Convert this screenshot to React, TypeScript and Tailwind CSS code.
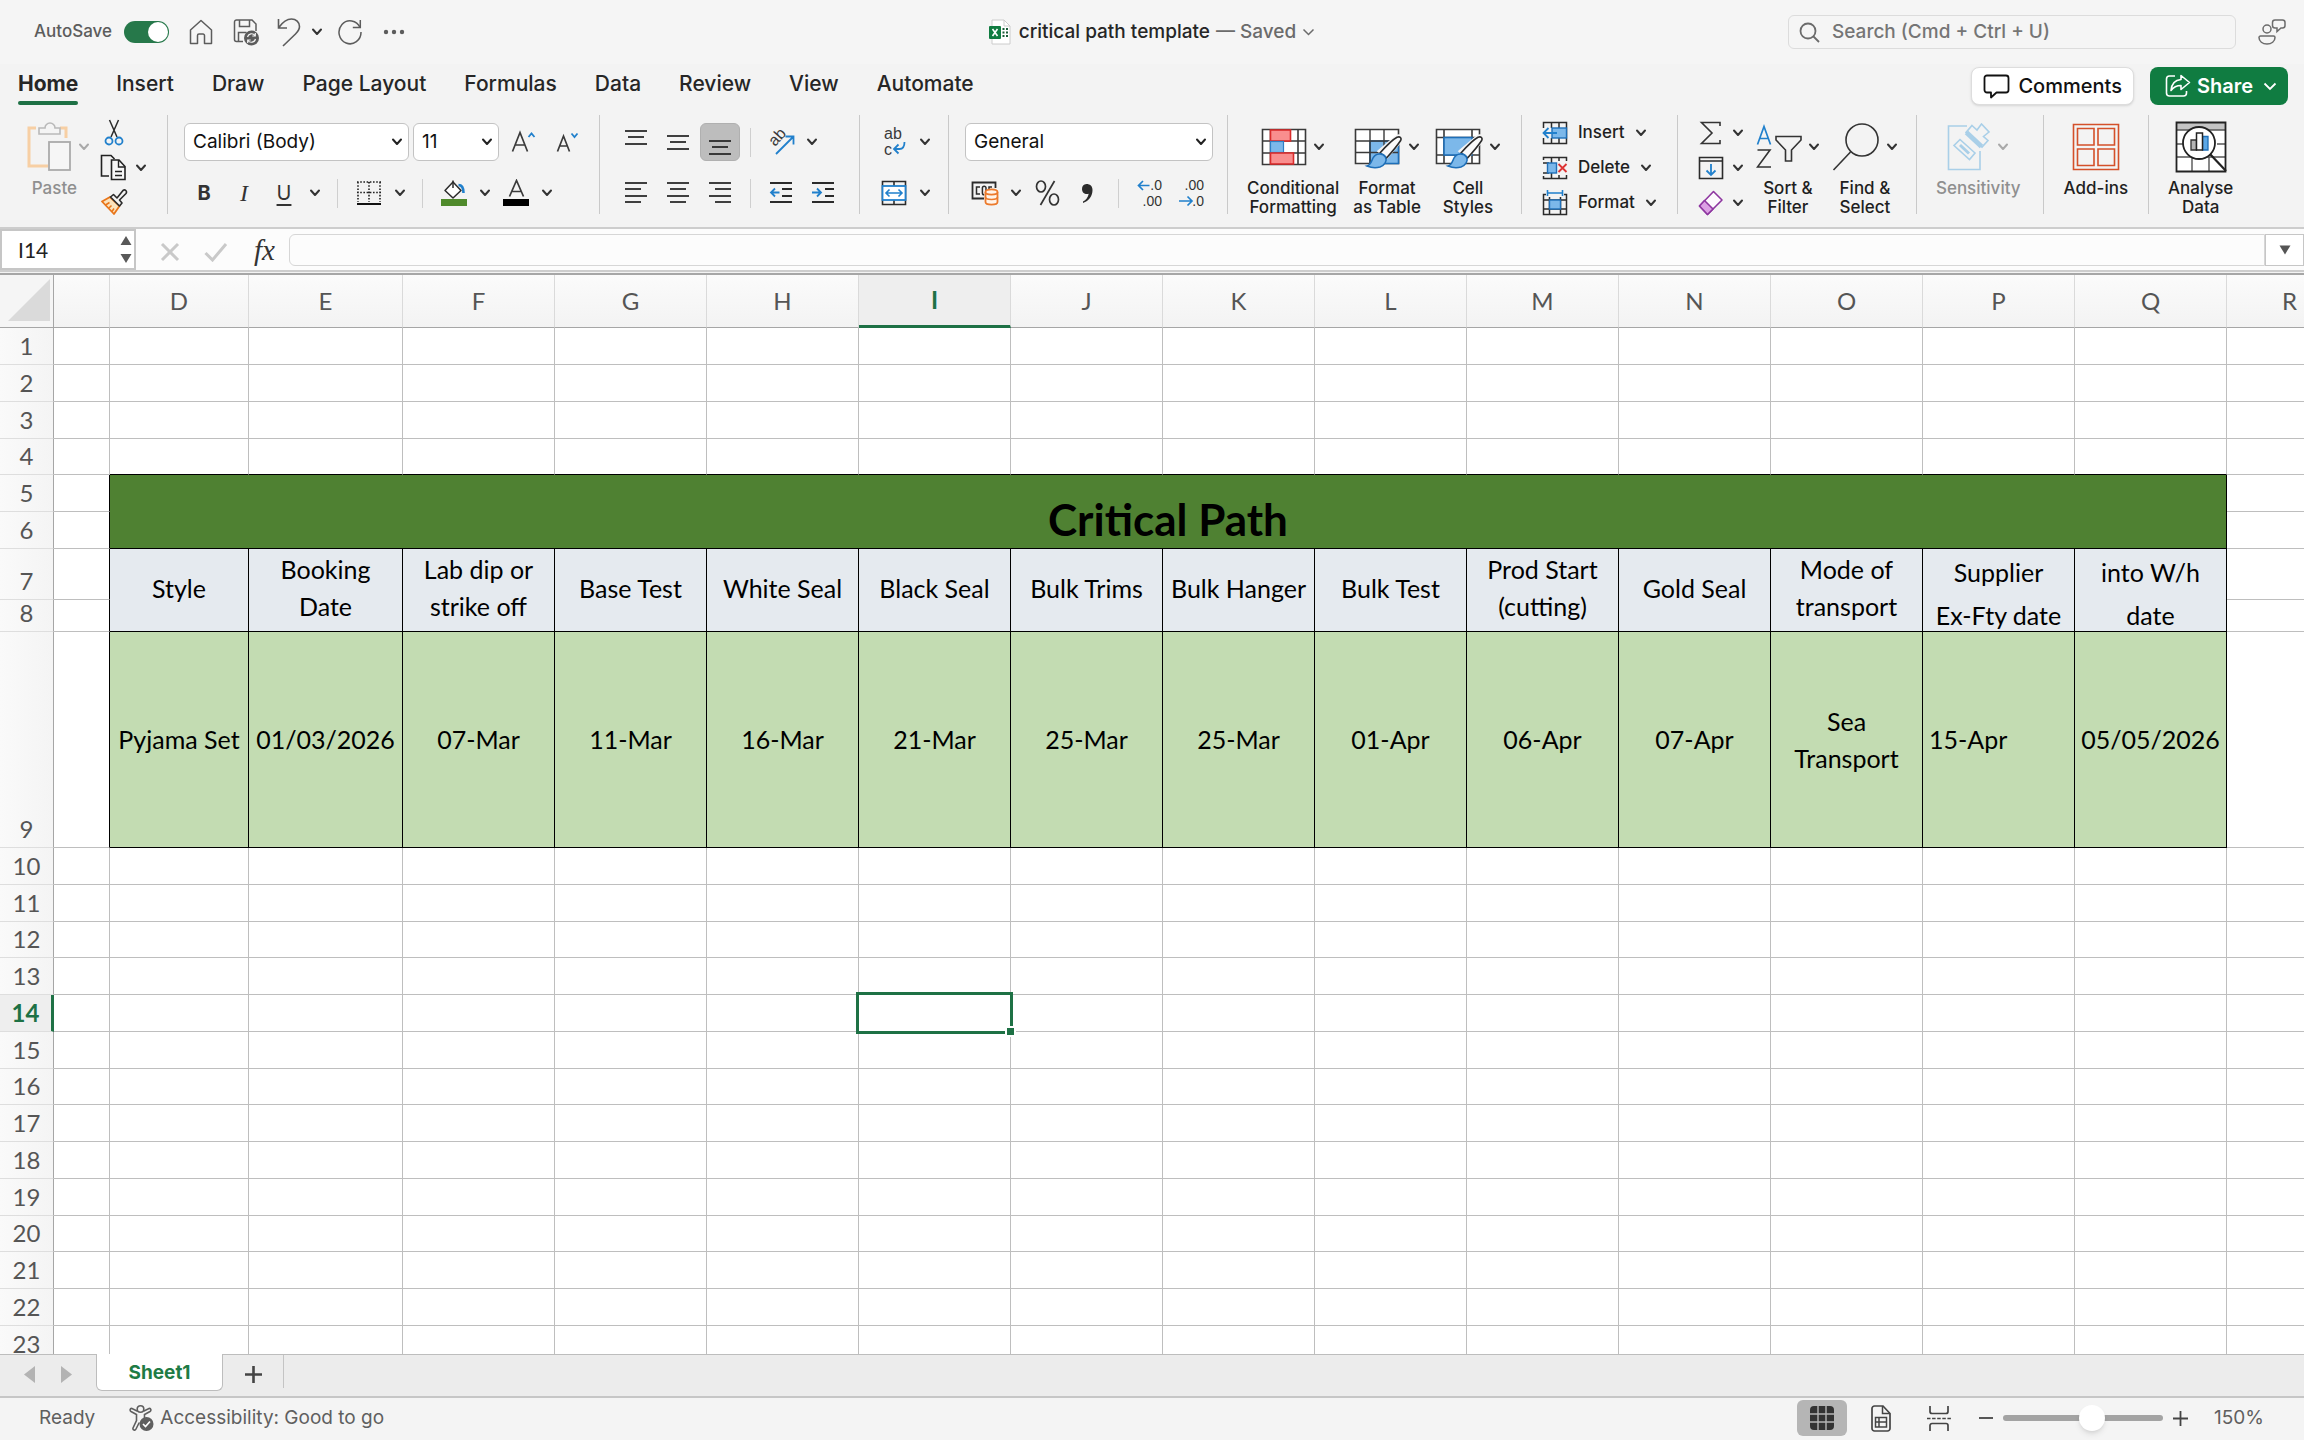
import { useState } from 'react';
import type { ReactNode } from 'react';

// ---------- Data ----------

const TABS = ['Home', 'Insert', 'Draw', 'Page Layout', 'Formulas', 'Data', 'Review', 'View', 'Automate'];

const COLUMNS = [
  { id: '', width: 56 },
  { id: 'D', width: 139 },
  { id: 'E', width: 154 },
  { id: 'F', width: 152 },
  { id: 'G', width: 152 },
  { id: 'H', width: 152 },
  { id: 'I', width: 152 },
  { id: 'J', width: 152 },
  { id: 'K', width: 152 },
  { id: 'L', width: 152 },
  { id: 'M', width: 152 },
  { id: 'N', width: 152 },
  { id: 'O', width: 152 },
  { id: 'P', width: 152 },
  { id: 'Q', width: 152 },
  { id: 'R', width: 126 },
];

// Row heights from row 1 on
const ROWS = [37, 37, 37, 36, 37, 37, 51, 32, 216, 37, 37, 36, 37, 37, 37, 36, 37, 37, 37, 36, 37, 37, 37];

const HEADINGS = [
  ['Style'],
  ['Booking', 'Date'],
  ['Lab dip or', 'strike off'],
  ['Base Test'],
  ['White Seal'],
  ['Black Seal'],
  ['Bulk Trims'],
  ['Bulk Hanger'],
  ['Bulk Test'],
  ['Prod Start', '(cutting)'],
  ['Gold Seal'],
  ['Mode of', 'transport'],
  ['Supplier', 'Ex-Fty date'],
  ['into W/h', 'date'],
];

const VALUES = [
  'Pyjama Set', '01/03/2026', '07-Mar', '11-Mar', '16-Mar', '21-Mar', '25-Mar', '25-Mar',
  '01-Apr', '06-Apr', '07-Apr', 'Sea Transport', '15-Apr', '05/05/2026',
];

// ---------- Small parts ----------

function Svg({ w, h, children, className = '' }: { w: number; h: number; children: ReactNode; className?: string }) {
  return (
    <svg width={w} height={h} viewBox={`0 0 ${w} ${h}`} fill="none" className={`shrink-0 ${className}`} aria-hidden>
      {children}
    </svg>
  );
}

function Chevron({ className = 'text-[#333333]' }: { className?: string }) {
  return (
    <Svg w={12} h={8} className={className}>
      <path d="M2 1.5 6 6l4-4.5" stroke="currentColor" strokeWidth="2" strokeLinecap="round" strokeLinejoin="round" />
    </Svg>
  );
}

function Tool({ label, active, children }: { label: string; active?: boolean; children: ReactNode }) {
  return (
    <button
      type="button"
      aria-label={label}
      className={`flex h-[38px] w-10 items-center justify-center rounded-md ${active ? 'border border-[#b0b0b0] bg-[#bdbdbd]' : ''}`}
    >
      {children}
    </button>
  );
}

function Drop({ label }: { label: string }) {
  return (
    <button type="button" aria-label={label} className="flex h-[38px] w-[22px] items-center justify-center">
      <Chevron />
    </button>
  );
}

function Rule() {
  return <span className="mx-[11px] h-[29px] w-px bg-[#cfcfcf]" />;
}

function Group({ children, className = '' }: { children: ReactNode; className?: string }) {
  return <div className={`flex h-[99px] shrink-0 border-r border-[#c9c9c9] ${className}`}>{children}</div>;
}

function TwoRows({ children }: { children: ReactNode }) {
  return <div className="flex flex-col gap-[13px] pt-2">{children}</div>;
}

function Picker({ label, value, className }: { label: string; value: string; className: string }) {
  return (
    <label className={`relative flex h-[38px] items-center ${className}`}>
      <select
        aria-label={label}
        className="h-full w-full appearance-none rounded-md border border-[#c3c3c3] bg-white pl-2 text-[19px] text-[#111111] outline-none"
      >
        <option>{value}</option>
      </select>
      <Chevron className="pointer-events-none absolute right-1.5 text-[#222222]" />
    </label>
  );
}

function BigTool({ lines, icon, drop, muted }: { lines: string[]; icon: ReactNode; drop?: boolean; muted?: boolean }) {
  return (
    <button type="button" className={`flex flex-col items-center self-start pt-2 text-[17px] leading-[19px] font-medium ${muted ? 'text-[#8f8f8f]' : 'text-[#1f1f1f]'}`}>
      <span className="flex h-12 items-center gap-1.5">
        {icon}
        {drop && <Chevron className={muted ? 'text-[#a9a9a9]' : 'text-[#333333]'} />}
      </span>
      <span className="mt-2 flex flex-col">
        {lines.map((line) => (
          <span key={line}>{line}</span>
        ))}
      </span>
    </button>
  );
}

// Text lines of an alignment icon, each as [x1, x2, y]
function TextLines({ rows }: { rows: number[][] }) {
  return (
    <Svg w={24} h={26}>
      {rows.map(([x1, x2, y], i) => (
        <path key={i} d={`M${x1} ${y}H${x2}`} stroke="#2b2b2b" strokeWidth="1.8" />
      ))}
    </Svg>
  );
}

// ---------- Title bar ----------

function TitleBar() {
  const [autoSave, setAutoSave] = useState(true);
  return (
    <header className="grid h-16 grid-cols-[1fr_auto_1fr] items-center bg-[#f5f5f5]">
      <div className="flex items-center pl-[34px] text-[#5c5c5c]">
        <label className="flex items-center gap-3 text-[17px] font-medium">
          AutoSave
          <input type="checkbox" checked={autoSave} onChange={() => setAutoSave(!autoSave)} className="peer sr-only" />
          <span className="flex h-[22px] w-[45px] items-center justify-end rounded-full bg-[#26784a] px-px">
            <span className="h-5 w-5 rounded-full bg-white" />
          </span>
        </label>
        <button type="button" aria-label="Home" className="ml-5">
          <Svg w={24} h={26}>
            <path d="M1.5 11 12 1.5 22.5 11V24.5h-7V16.5a1.5 1.5 0 0 0-1.5-1.5h-4a1.5 1.5 0 0 0-1.5 1.5v8h-7z" stroke="currentColor" strokeWidth="1.5" strokeLinejoin="round" />
          </Svg>
        </button>
        <button type="button" aria-label="Save" className="ml-5">
          <Svg w={26} h={28}>
            <path d="M10 23.5H3.5a2 2 0 0 1-2-2V4a2 2 0 0 1 2-2H19l4 4v7" stroke="currentColor" strokeWidth="1.5" />
            <path d="M6.5 2v6.5h10V2M5.5 23v-8.5h8" stroke="currentColor" strokeWidth="1.5" />
            <circle cx="18.5" cy="20" r="7.5" fill="currentColor" />
            <path d="M14.5 19a4.2 4.2 0 0 1 7.5-1.5M22.3 15v3h-3M22.5 21a4.2 4.2 0 0 1-7.5 1.5M14.7 25v-3h3" stroke="#f5f5f5" strokeWidth="1.2" />
          </Svg>
        </button>
        <button type="button" aria-label="Undo" className="ml-[18px]">
          <Svg w={24} h={30}>
            <path d="M1.5 2v9h8.5M1.8 10.5C5 6 9 2 14.5 2c4.5 0 8 3 8 7.5 0 3.5-2 5.5-4 7.5L6 29" stroke="currentColor" strokeWidth="1.6" />
          </Svg>
        </button>
        <button type="button" aria-label="Undo list" className="ml-2.5">
          <Chevron />
        </button>
        <button type="button" aria-label="Redo" className="ml-3.5">
          <Svg w={26} h={28}>
            <path d="M23 9.5A11 11.5 0 1 0 24 14" stroke="currentColor" strokeWidth="1.5" />
            <path d="M23.3 2v7.5h-7.5" stroke="currentColor" strokeWidth="1.5" />
          </Svg>
        </button>
        <button type="button" aria-label="More commands" className="ml-5">
          <Svg w={22} h={6}>
            <circle cx="3" cy="3" r="2.2" fill="currentColor" />
            <circle cx="11" cy="3" r="2.2" fill="currentColor" />
            <circle cx="19" cy="3" r="2.2" fill="currentColor" />
          </Svg>
        </button>
      </div>

      <h1 className="flex items-center text-[19px] font-medium text-[#262626]">
        <Svg w={22} h={26} className="mr-2">
          <path d="M3 1h12l6 6v18H3z" fill="#ffffff" stroke="#cccccc" />
          <path d="M15 1v6h6" stroke="#cccccc" />
          <rect x="0" y="7" width="12" height="13" rx="1" fill="#107c41" />
          <path d="m3.5 10 5 7M8.5 10l-5 7" stroke="#ffffff" strokeWidth="1.6" />
          <path d="M13.5 10h2M17 10h2M13.5 13.5h2M17 13.5h2M13.5 17h2M17 17h2" stroke="#185c37" strokeWidth="2" />
        </Svg>
        critical path template
        <span className="ml-1.5 text-[#6b6b6b]">— Saved</span>
        <Svg w={13} h={8} className="ml-1.5 text-[#6b6b6b]">
          <path d="m1.5 1.5 5 5 5-5" stroke="currentColor" strokeWidth="1.5" />
        </Svg>
      </h1>

      <div className="flex items-center justify-end pr-[18px] text-[#6b6b6b]">
        <label className="flex h-[34px] w-[448px] items-center gap-3 rounded-md border border-[#dcdcdc] bg-[#f5f5f5] pl-2.5">
          <Svg w={21} h={21}>
            <circle cx="9" cy="9" r="7.5" stroke="currentColor" strokeWidth="1.8" />
            <path d="m14.5 14.5 5.5 5.5" stroke="currentColor" strokeWidth="1.8" />
          </Svg>
          <input
            aria-label="Search"
            placeholder="Search (Cmd + Ctrl + U)"
            className="w-full bg-transparent text-[19px] font-medium outline-none placeholder:text-[#757575]"
          />
        </label>
        <button type="button" aria-label="Presence" className="ml-[22px]">
          <Svg w={28} h={28}>
            <circle cx="9" cy="11" r="4" stroke="currentColor" strokeWidth="1.5" />
            <path d="M2.5 18h13a1.5 1.5 0 0 1 1.5 1.5c0 4-3.5 6.5-8 6.5s-8-2.5-8-6.5A1.5 1.5 0 0 1 2.5 18z" stroke="currentColor" strokeWidth="1.5" />
            <path d="M17 2h7.5A2.5 2.5 0 0 1 27 4.5v3a2.5 2.5 0 0 1-2.5 2.5H23l-4 3.5V10h-2a2.5 2.5 0 0 1-2.5-2.5v-3A2.5 2.5 0 0 1 17 2z" stroke="currentColor" strokeWidth="1.5" />
          </Svg>
        </button>
      </div>
    </header>
  );
}

// ---------- Tabs ----------

function RibbonTabs() {
  return (
    <nav className="flex h-[51px] items-start bg-[#f3f3f3] pl-[18px] pr-4">
      <div className="flex gap-[38px]">
        {TABS.map((tab) => (
          <button key={tab} type="button" className={`flex flex-col pt-2 text-[21px] leading-6 ${tab === 'Home' ? 'font-bold' : 'font-medium'} text-[#262626]`}>
            {tab}
            {tab === 'Home' && <span className="mt-[5px] h-1 w-full rounded-full bg-[#1e7145]" />}
          </button>
        ))}
      </div>
      <div className="ml-auto flex gap-4 pt-[3px]">
        <button type="button" className="flex h-[38px] items-center gap-2 rounded-lg border border-[#dddddd] bg-white px-[11px] text-[20px] font-medium text-[#111111] shadow-sm">
          <Svg w={27} h={25}>
            <path d="M4 1.5h19A2.5 2.5 0 0 1 25.5 4v12a2.5 2.5 0 0 1-2.5 2.5H13.5L8 23.5v-5H4A2.5 2.5 0 0 1 1.5 16V4A2.5 2.5 0 0 1 4 1.5z" stroke="currentColor" strokeWidth="1.8" strokeLinejoin="round" />
          </Svg>
          Comments
        </button>
        <button type="button" className="flex h-[38px] items-center rounded-lg bg-[#107c41] px-[11px] text-[20px] font-semibold text-white">
          <Svg w={26} h={24} className="mr-1.5 ml-1">
            <path d="M10 2H4.5a3 3 0 0 0-3 3v14a3 3 0 0 0 3 3h14a3 3 0 0 0 3-3v-2" stroke="currentColor" strokeWidth="1.6" />
            <path d="M16 1.5 24.5 8.5 16 15.5v-4c-4.5 0-7.5 1.5-10 5 .5-6 4-10.5 10-11z" stroke="currentColor" strokeWidth="1.6" strokeLinejoin="round" />
          </Svg>
          Share
          <Svg w={14} h={9} className="ml-2.5">
            <path d="m1.5 1.5 5.5 5.5 5.5-5.5" stroke="currentColor" strokeWidth="1.8" />
          </Svg>
        </button>
      </div>
    </nav>
  );
}

// ---------- Ribbon ----------

function PasteIcon() {
  return (
    <Svg w={46} h={50}>
      <path d="M10 6H3v38h19M34 6h6v10" stroke="#f7cfa4" strokeWidth="3" />
      <path d="M14 6h5a5 5 0 0 1 10 0h5v6H13V6z" fill="#f4f4f4" stroke="#b9b9b9" strokeWidth="1.6" />
      <rect x="23" y="20" width="21" height="28" fill="#f6f6f6" stroke="#ababab" strokeWidth="1.8" />
    </Svg>
  );
}

function ClipboardGroup() {
  return (
    <Group className="pl-[26px]">
      <button type="button" className="flex flex-col items-start self-start pt-2 text-[17px] leading-[19px] font-medium text-[#8f8f8f]">
        <span className="flex h-12 items-center gap-1.5">
          <PasteIcon />
          <Chevron className="text-[#a9a9a9]" />
        </span>
        <span className="mt-2 w-[51px] text-right">Paste</span>
      </button>
      <div className="ml-2.5 flex w-[67px] flex-col gap-2 pt-1">
        <button type="button" aria-label="Cut" className="ml-1 w-5">
          <Svg w={20} h={27}>
            <path d="M5.5 1 13 18M14.5 1 7 18" stroke="#2b2b2b" strokeWidth="1.5" />
            <circle cx="5" cy="22" r="3.5" stroke="#2180cc" strokeWidth="1.8" />
            <circle cx="15" cy="22" r="3.5" stroke="#2180cc" strokeWidth="1.8" />
          </Svg>
        </button>
        <button type="button" aria-label="Copy" className="flex items-center gap-2">
          <Svg w={27} h={27}>
            <path d="M9 22H1.5V1.5H11l3.5 3.5" stroke="#222222" strokeWidth="1.6" />
            <path d="M11.5 6H19l6 6.5v13H11.5z" fill="#f6f6f6" stroke="#222222" strokeWidth="1.6" />
            <path d="M18.5 6v7H25M15 17.5h7M15 21.5h7" stroke="#222222" strokeWidth="1.4" />
          </Svg>
          <Chevron />
        </button>
        <button type="button" aria-label="Format Painter" className="w-7">
          <Svg w={28} h={26}>
            <path d="M2 12.5 10 8l9.5 9L14 25z" fill="#fbe3bd" stroke="#e8751a" strokeWidth="1.8" strokeLinejoin="round" />
            <path d="m5.5 16 4-2.5M9 19l2.5-2.5M12 22.5l2-3" stroke="#e8751a" strokeWidth="1.5" />
            <path d="m10.5 8 3-2.5 3.5 3.5 6-7.5c2-1.5 4.5.5 3 3L19.5 11l2.5 3-2.5 3z" fill="#f4f4f4" stroke="#2b2b2b" strokeWidth="1.6" strokeLinejoin="round" />
          </Svg>
        </button>
      </div>
    </Group>
  );
}

function FontGroup() {
  return (
    <Group className="pl-4 pr-3">
      <TwoRows>
        <div className="flex items-center gap-1">
          <Picker label="Font" value="Calibri (Body)" className="w-[225px]" />
          <Picker label="Font size" value="11" className="w-[86px]" />
          <Tool label="Increase font size">
            <Svg w={25} h={24}>
              <path d="M1.5 21.5 9 2.5l7.5 19M4 15h10" stroke="#3a3a3a" strokeWidth="1.7" />
              <path d="m17.5 7 3-3.5 3 3.5" stroke="#2180cc" strokeWidth="1.8" />
            </Svg>
          </Tool>
          <Tool label="Decrease font size">
            <Svg w={23} h={24}>
              <path d="m1.5 21.5 6-15.5 6 15.5M3.5 16h8" stroke="#3a3a3a" strokeWidth="1.7" />
              <path d="m15.5 3.5 3 3.5 3-3.5" stroke="#2180cc" strokeWidth="1.8" />
            </Svg>
          </Tool>
        </div>
        <div className="flex items-center text-[#333333]">
          <Tool label="Bold"><span className="text-[20px] font-bold">B</span></Tool>
          <Tool label="Italic"><span className="font-['Liberation_Serif'] text-[24px] italic">I</span></Tool>
          <Tool label="Underline"><span className="text-[20px] underline underline-offset-4">U</span></Tool>
          <Drop label="Underline styles" />
          <Rule />
          <Tool label="Borders">
            <Svg w={26} h={26}>
              <path d="M1 2h24M1 12.5h24M2 2v20M13 2v20M24 2v20" stroke="#222222" strokeWidth="1.6" strokeDasharray="1.6 1.6" />
              <path d="M1 24h24" stroke="#111111" strokeWidth="2" />
            </Svg>
          </Tool>
          <Drop label="Border styles" />
          <Rule />
          <Tool label="Fill colour">
            <Svg w={26} h={28}>
              <path d="m4 11.5 8-8.5 8 8.5-8 7.5z" fill="#ffffff" stroke="#2b2b2b" strokeWidth="1.5" strokeLinejoin="round" />
              <path d="M12 9V1.5" stroke="#2b2b2b" strokeWidth="1.5" />
              <path d="M17.5 6c3.5 0 5 2.5 5 8" stroke="#2180cc" strokeWidth="2.6" />
              <rect x="0" y="20" width="26" height="7" fill="#4f8a2b" />
            </Svg>
          </Tool>
          <Drop label="Fill colours" />
          <Tool label="Font colour">
            <Svg w={26} h={28}>
              <path d="m6.500 17.500 7-16 7 16M9 12.500h9" stroke="#3a3a3a" strokeWidth="1.7" />
              <rect x="0" y="20" width="26" height="7" fill="#000000" />
            </Svg>
          </Tool>
          <Drop label="Font colours" />
        </div>
      </TwoRows>
    </Group>
  );
}

function AlignmentGroup() {
  return (
    <Group className="px-4">
      <TwoRows>
        <div className="flex items-center">
          <div className="flex gap-0.5">
            <Tool label="Top align"><TextLines rows={[[1, 23, 2], [4, 20, 8], [1, 23, 15]]} /></Tool>
            <Tool label="Middle align"><TextLines rows={[[1, 23, 7], [4, 20, 13], [1, 23, 20]]} /></Tool>
            <Tool label="Bottom align" active><TextLines rows={[[1, 23, 12], [4, 20, 18], [1, 23, 25]]} /></Tool>
          </div>
          <span className="mx-2.5 h-[29px] w-px bg-[#cfcfcf]" />
          <Tool label="Orientation">
            <Svg w={34} h={34}>
              <text transform="translate(11 22) rotate(-48)" fontSize="16" fill="#3a3a3a" className="font-['Liberation_Sans']">ab</text>
              <path d="M12 29 29 12M21.5 11.500h8v8" stroke="#2180cc" strokeWidth="1.8" />
            </Svg>
          </Tool>
          <Drop label="Orientation list" />
        </div>
        <div className="flex items-center">
          <div className="flex gap-0.5">
            <Tool label="Align left"><TextLines rows={[[1, 23, 3], [1, 17, 9], [1, 23, 16], [1, 17, 22]]} /></Tool>
            <Tool label="Centre"><TextLines rows={[[1, 23, 3], [4, 20, 9], [1, 23, 16], [4, 20, 22]]} /></Tool>
            <Tool label="Align right"><TextLines rows={[[1, 23, 3], [7, 23, 9], [1, 23, 16], [7, 23, 22]]} /></Tool>
          </div>
          <span className="mx-2.5 h-[29px] w-px bg-[#cfcfcf]" />
          <div className="flex gap-0.5">
            <Tool label="Decrease indent">
              <Svg w={24} h={26}>
                <path d="M1 3h22M13 9h10M13 16h10M1 22h22" stroke="#2b2b2b" strokeWidth="1.8" />
                <path d="M10.5 12.5h-8M6 8.500l-4 4 4 4" stroke="#2180cc" strokeWidth="1.8" />
              </Svg>
            </Tool>
            <Tool label="Increase indent">
              <Svg w={24} h={26}>
                <path d="M1 3h22M14 9h9M14 16h9M1 22h22" stroke="#2b2b2b" strokeWidth="1.8" />
                <path d="M1 12.5h9M6 8.500l4 4-4 4" stroke="#2180cc" strokeWidth="1.8" />
              </Svg>
            </Tool>
          </div>
        </div>
      </TwoRows>
    </Group>
  );
}

function WrapGroup() {
  return (
    <Group className="pl-3.5 pr-3">
      <TwoRows>
        <div className="flex items-center">
          <Tool label="Wrap text">
            <Svg w={26} h={36} className="font-['Liberation_Sans']">
              <text x="3" y="15" fontSize="16" fill="#3a3a3a">ab</text>
              <text x="3" y="31" fontSize="16" fill="#3a3a3a">c</text>
              <path d="M23.5 18c0 4-1.500 7-5 7h-5M17.500 20.500 13 25l4.500 4.500" stroke="#2180cc" strokeWidth="1.8" />
            </Svg>
          </Tool>
          <Drop label="Wrap options" />
        </div>
        <div className="flex items-center">
          <Tool label="Merge">
            <Svg w={26} h={26}>
              <path d="M1.5 1.5h23v23h-23zM13 1.5V6M13 20v4.5" stroke="#2b2b2b" strokeWidth="1.6" />
              <rect x="1.5" y="6" width="23" height="14" fill="#ffffff" stroke="#2180cc" strokeWidth="1.8" />
              <path d="M5 13h16M8.5 9.5 5 13l3.5 3.5M17.5 9.5 21 13l-3.5 3.5" stroke="#2180cc" strokeWidth="1.6" />
            </Svg>
          </Tool>
          <Drop label="Merge options" />
        </div>
      </TwoRows>
    </Group>
  );
}

function NumberGroup() {
  return (
    <Group className="pl-4 pr-3.5">
      <TwoRows>
        <Picker label="Number format" value="General" className="w-[248px]" />
        <div className="flex items-center">
          <Tool label="Accounting format">
            <Svg w={28} h={26}>
              <path d="M13 18.5H1.5v-16h23V8" stroke="#2b2b2b" strokeWidth="1.8" />
              <path d="M9 7H5.5v7H9M15 13V8a1.8 1.8 0 0 0-3.6 0v5a1.8 1.8 0 0 0 1.8 1.8M18 9V7h3" stroke="#2b2b2b" strokeWidth="1.5" />
              <path d="M14.5 12v10c0 3.5 12 3.5 12 0V12" fill="#fff4ea" stroke="#ec7a2c" strokeWidth="1.8" />
              <ellipse cx="20.5" cy="12" rx="6" ry="2.6" fill="#fff4ea" stroke="#ec7a2c" strokeWidth="1.8" />
              <path d="M14.5 17c0 3.3 12 3.3 12 0" stroke="#ec7a2c" strokeWidth="1.6" />
            </Svg>
          </Tool>
          <Drop label="Currencies" />
          <Tool label="Percent">
            <Svg w={25} h={28}>
              <ellipse cx="6" cy="7.5" rx="4.5" ry="5.5" stroke="#333333" strokeWidth="1.7" />
              <ellipse cx="19" cy="20.5" rx="4.5" ry="5.5" stroke="#333333" strokeWidth="1.7" />
              <path d="M19.5 2 5.5 26" stroke="#333333" strokeWidth="1.7" />
            </Svg>
          </Tool>
          <Tool label="Comma style">
            <Svg w={14} h={22}>
              <path d="M6.5 2A5 5 0 0 0 2 7c0 3 2 5 5 5 .6 0 1.2-.1 1.7-.3C8 15.5 6 18 3 19.5v1.5c6-2 9.5-7 9.5-13C12.5 4 10 2 6.5 2z" fill="#2b2b2b" />
            </Svg>
          </Tool>
          <Rule />
          <div className="flex gap-0.5">
            <Tool label="Increase decimal">
              <Svg w={26} h={34} className="font-['Liberation_Sans']">
                <text x="25" y="14" textAnchor="end" fontSize="14" fill="#333333">.0</text>
                <text x="25" y="30" textAnchor="end" fontSize="14" fill="#333333">.00</text>
                <path d="M12.5 9.500H2M6 5 1.500 9.500 6 14" stroke="#2180cc" strokeWidth="1.7" />
              </Svg>
            </Tool>
            <Tool label="Decrease decimal">
              <Svg w={26} h={34} className="font-['Liberation_Sans']">
                <text x="25" y="14" textAnchor="end" fontSize="14" fill="#333333">.00</text>
                <text x="25" y="30" textAnchor="end" fontSize="14" fill="#333333">.0</text>
                <path d="M0 25h12M8.500 20.500 13 25l-4.500 4.500" stroke="#2180cc" strokeWidth="1.7" />
              </Svg>
            </Tool>
          </div>
        </div>
      </TwoRows>
    </Group>
  );
}

function Brush() {
  return (
    <>
      <path d="M26 27 42 13.5c3.5-2.5 6.5 0 4 3.5L33 32z" fill="#fafafa" stroke="#f4f4f4" strokeWidth="4" />
      <path d="M26 29C34 20 38 16 43 13.3c3-1.3 5 .7 3.5 3.5C43 22 38 28 32.5 34z" fill="#fafafa" stroke="#2b2b2b" strokeWidth="1.6" />
      <path d="M13 42c4-1 4-4 6-8 2.5-5 10-5.5 12.5-1 2 4-1 8.5-5.5 10-4 1.2-9 .7-13-1z" fill="#7cb8ea" stroke="#1e6fb8" strokeWidth="1.6" />
    </>
  );
}

function StylesGroup() {
  return (
    <Group className="gap-3.5 pl-[19px] pr-5">
      <BigTool
        drop
        lines={['Conditional', 'Formatting']}
        icon={
          <Svg w={46} h={38}>
            <path d="M1.5 1.5h43v35h-43zM1.5 13h43M1.5 25h43M37 1.5v35M9.5 1.5v35" fill="#ffffff" stroke="#3a3a3a" strokeWidth="1.6" />
            <rect x="9.5" y="2" width="20" height="11" fill="#f98e8e" stroke="#d92c2c" strokeWidth="1.6" />
            <rect x="9.5" y="13.5" width="13" height="11" fill="#7cb8ea" stroke="#2f7fc4" strokeWidth="1.2" />
            <rect x="9.5" y="25" width="23" height="11" fill="#f98e8e" stroke="#d92c2c" strokeWidth="1.6" />
          </Svg>
        }
      />
      <BigTool
        drop
        lines={['Format', 'as Table']}
        icon={
          <Svg w={48} h={46}>
            <path d="M1.5 5.5h43v34h-43z" fill="#ffffff" stroke="#3a3a3a" strokeWidth="1.6" />
            <path d="M16 17h28.5v22.5H16z" fill="#7cb8ea" stroke="#1e6fb8" strokeWidth="1.6" />
            <path d="M1.5 17H44M1.5 28.5H44M16 5.5v34M30 5.5v34" stroke="#3a3a3a" strokeWidth="1.4" />
            <Brush />
          </Svg>
        }
      />
      <BigTool
        drop
        lines={['Cell', 'Styles']}
        icon={
          <Svg w={48} h={46}>
            <path d="M1.5 5.5h43v34h-43zM1.5 13.5h43M1.5 31h43M9 5.5v34M37 5.5v34" fill="#ffffff" stroke="#3a3a3a" strokeWidth="1.6" />
            <rect x="9" y="13.5" width="28" height="17.5" fill="#7cb8ea" stroke="#1e6fb8" strokeWidth="1.6" />
            <Brush />
          </Svg>
        }
      />
    </Group>
  );
}

function RowTool({ label, icon }: { label: string; icon: ReactNode }) {
  return (
    <button type="button" className="flex h-[35px] shrink-0 items-center text-[17px] font-medium text-[#1f1f1f]">
      {icon}
      <span className="mr-2.5 ml-2.5">{label}</span>
      <Chevron />
    </button>
  );
}

function CellsGroup() {
  return (
    <Group className="flex-col pl-5 pr-5">
      <RowTool
        label="Insert"
        icon={
          <Svg w={26} h={24}>
            <path d="M1.5 7V1.5h23v21h-23V17M9.5 1.5V7M17 1.5V7M9.5 17v5.5M17 17v5.5" stroke="#2b2b2b" strokeWidth="1.5" />
            <rect x="10" y="7" width="14.5" height="10" fill="#7cb8ea" stroke="#1e6fb8" strokeWidth="1.4" />
            <path d="M15 12H2M6.5 7 1.5 12l5 5" stroke="#2180cc" strokeWidth="1.8" />
          </Svg>
        }
      />
      <RowTool
        label="Delete"
        icon={
          <Svg w={26} h={24}>
            <path d="M1.5 4V1.5h23V5M1.5 20v2.5h23V19M1 7h6M1 17h6M9.5 1.5V7M17 1.5V5M9.5 17v5.5M17 19v3.5" stroke="#2b2b2b" strokeWidth="1.5" />
            <rect x="5.5" y="7" width="9" height="10" fill="#7cb8ea" stroke="#1e6fb8" strokeWidth="1.4" />
            <path d="m16.5 8 8 8M24.5 8l-8 8" stroke="#dd3333" strokeWidth="1.8" />
          </Svg>
        }
      />
      <RowTool
        label="Format"
        icon={
          <Svg w={26} h={28}>
            <path d="M5.5 4h15M5.5 1v6M20.5 1v6" stroke="#2180cc" strokeWidth="1.6" />
            <path d="M4 5.5H1.5v20h23v-20H22M1.5 11h23M1.5 20h23M7.5 8v17.5M18.5 8v17.5" stroke="#2b2b2b" strokeWidth="1.5" />
            <rect x="7.5" y="11" width="11" height="9" fill="#7cb8ea" stroke="#1e6fb8" strokeWidth="1.4" />
          </Svg>
        }
      />
    </Group>
  );
}

function EditingGroup() {
  return (
    <Group className="pl-5 pr-[18px]">
      <div className="mr-3 flex flex-col">
        <button type="button" aria-label="AutoSum" className="flex h-[35px] shrink-0 items-center gap-2">
          <Svg w={26} h={24}>
            <path d="M22 5V1.5H3.5L14 12 3.5 22.5H22V19" stroke="#333333" strokeWidth="1.6" />
          </Svg>
          <Chevron />
        </button>
        <button type="button" aria-label="Fill" className="flex h-[35px] shrink-0 items-center gap-2">
          <Svg w={26} h={24}>
            <path d="M1.5 1.5h23v21h-23zM1.5 5h23" stroke="#2b2b2b" strokeWidth="1.6" />
            <path d="M13 8v11M8.5 14.5 13 19l4.5-4.5" stroke="#2180cc" strokeWidth="1.8" />
          </Svg>
          <Chevron />
        </button>
        <button type="button" aria-label="Clear" className="flex h-[35px] shrink-0 items-center gap-2">
          <Svg w={26} h={26}>
            <path d="M15.5 1.5 24 10 9.5 24.5 1.5 16z" fill="#fdfafd" stroke="#8e36a0" strokeWidth="1.6" strokeLinejoin="round" />
            <path d="m6.5 10.5 8.500 8.500-5.500 5.500L1.500 16z" fill="#dca0e4" stroke="#8e36a0" strokeWidth="1.6" strokeLinejoin="round" />
          </Svg>
          <Chevron />
        </button>
      </div>
      <div className="flex gap-3">
        <BigTool
          drop
          lines={['Sort &', 'Filter']}
          icon={
            <Svg w={46} h={46}>
              <path d="m1.5 20.5 6.5-18 6.5 18M3.5 14.5h9" stroke="#2180cc" strokeWidth="1.7" />
              <path d="M1.5 26h12.5L1.5 43h13.5" stroke="#333333" strokeWidth="1.6" />
              <path d="M20 12.5h25v3.5L35.5 26v11h-6V26L20 16z" stroke="#333333" strokeWidth="1.6" />
            </Svg>
          }
        />
        <BigTool
          drop
          lines={['Find &', 'Select']}
          icon={
            <Svg w={48} h={48}>
              <circle cx="30" cy="17" r="16" stroke="#333333" strokeWidth="1.6" />
              <path d="M18.5 29 1.5 47" stroke="#333333" strokeWidth="1.6" />
            </Svg>
          }
        />
      </div>
    </Group>
  );
}

function LastGroups() {
  return (
    <>
      <Group className="pl-[19px] pr-[22px]">
        <BigTool
          drop
          muted
          lines={['Sensitivity']}
          icon={
            <Svg w={44} h={48}>
              <path d="M20 3H1.5v43.5H33V28" stroke="#a9cfe8" strokeWidth="1.6" />
              <path d="m13 16.5 15 13.5-5.5 6.5L7 22.5z" stroke="#a9cfe8" strokeWidth="1.6" />
              <path d="m13 22 9 8.500" stroke="#a9cfe8" strokeWidth="3" />
              <path d="m25 2.5 5 4.500 4.500-6L42 9l-5.500 4.500 4.500 4-6 6.500-16-14.500z" stroke="#a9cfe8" strokeWidth="1.6" />
              <path d="m19.5 9.500 15 14" stroke="#a9cfe8" strokeWidth="5" />
            </Svg>
          }
        />
      </Group>
      <Group className="px-5">
        <BigTool
          lines={['Add-ins']}
          icon={
            <Svg w={48} h={48}>
              <path d="M1.5 1.5h45v45h-45z" stroke="#d4502a" strokeWidth="1.6" />
              <path d="M5.5 5.5h16.5v16.5H5.5zM26 5.5h16.5v16.5H26zM5.5 26h16.5v16.5H5.5zM26 26h16.5v16.5H26z" stroke="#d4502a" strokeWidth="1.6" />
            </Svg>
          }
        />
      </Group>
      <div className="flex h-[99px] shrink-0 px-[19px]">
        <BigTool
          lines={['Analyse', 'Data']}
          icon={
            <Svg w={52} h={52}>
              <path d="M1.5 1.5h49v49h-49z" fill="#ffffff" />
              <path d="M1.5 1.5h49V9h-49z" fill="#c4c4c4" />
              <path d="M1.5 9h49M1.5 23h8M42 23h8.5M1.5 36h49M17 36v14.5M34 36v14.5" stroke="#555555" strokeWidth="1.4" />
              <path d="M1.5 1.5h49v49h-49z" stroke="#222222" strokeWidth="1.8" />
              <circle cx="24" cy="22" r="16" fill="#ffffff" stroke="#222222" strokeWidth="1.8" />
              <path d="M16 19h5.5v10H16z" fill="#b5b5b5" stroke="#333333" strokeWidth="1.3" />
              <path d="M27.5 15.5H33V29h-5.5z" fill="#5ba7e6" stroke="#1e6fb8" strokeWidth="1.3" />
              <path d="M21.5 12h6v17h-6z" fill="#ffffff" stroke="#222222" strokeWidth="1.5" />
              <path d="m35 33 16 17" stroke="#222222" strokeWidth="2.2" />
            </Svg>
          }
        />
      </div>
    </>
  );
}

function Ribbon() {
  return (
    <div className="flex h-28 items-start overflow-hidden bg-[#f3f3f3]">
      <ClipboardGroup />
      <FontGroup />
      <AlignmentGroup />
      <WrapGroup />
      <NumberGroup />
      <StylesGroup />
      <CellsGroup />
      <EditingGroup />
      <LastGroups />
    </div>
  );
}

// ---------- Formula bar ----------

function FormulaBar() {
  return (
    <div className="border-b-2 border-[#a6a6a6]">
      <div className="mb-px flex h-[45px] items-center border-y-2 border-[#cdcdcd] bg-[#fcfcfc]">
        <label className="flex h-full w-[136px] items-center border-2 border-[#c6c6c6] bg-white pr-0.5">
          <input aria-label="Name box" defaultValue="I14" className="w-full min-w-0 bg-transparent pl-4 font-['Lato'] text-[21px] text-[#222222] outline-none" />
          <Svg w={12} h={32} className="text-[#595959]">
            <path d="m6 2 5.500 9H.5zM6 29l5.500-9H.5z" fill="currentColor" />
          </Svg>
        </label>
        <button type="button" aria-label="Cancel" className="ml-6 pt-1">
          <Svg w={20} h={20}>
            <path d="m2 2 16 16M18 2 2 18" stroke="#c9c9c9" strokeWidth="3" />
          </Svg>
        </button>
        <button type="button" aria-label="Enter" className="ml-6 pt-1">
          <Svg w={24} h={20}>
            <path d="m1.5 11 7 7L22 2" stroke="#c9c9c9" strokeWidth="3" />
          </Svg>
        </button>
        <button type="button" aria-label="Insert function" className="ml-[26px] font-['Liberation_Serif'] text-[29px] leading-8 italic text-[#333333]">
          fx
        </button>
        <input aria-label="Formula" className="ml-3.5 h-8 min-w-0 flex-1 rounded-l-md border border-[#d6d6d6] bg-[#fcfcfc] px-2 text-[20px] outline-none" />
        <button type="button" aria-label="Expand formula bar" className="flex h-8 w-[39px] items-center justify-center border border-[#c6c6c6] bg-white">
          <Svg w={12} h={10}>
            <path d="M.5.5h11L6 9.5z" fill="#555555" />
          </Svg>
        </button>
      </div>
    </div>
  );
}

// ---------- Sheet ----------

function TitleRowCells() {
  return (
    <td colSpan={14} rowSpan={2} className="border-r border-b border-black bg-[#4f8132] p-0 text-center align-bottom text-[44px] leading-[58px] font-bold text-black">
      Critical Path
    </td>
  );
}

function HeadingCells() {
  return (
    <>
      {HEADINGS.map((lines, i) => (
        <td key={i} rowSpan={2} className={`border-r border-b border-black bg-[#e5eaef] p-0 text-center align-middle text-black ${i > 11 ? '' : 'pb-1'}`}>
          <div className={`overflow-hidden whitespace-nowrap ${i > 11 ? 'h-[82px] pt-0.5 leading-[43px]' : 'leading-[37px]'}`}>
            {lines.map((line) => (
              <div key={line}>{line}</div>
            ))}
          </div>
        </td>
      ))}
    </>
  );
}

function ValueCells() {
  return (
    <>
      {VALUES.map((value, i) => (
        <td
          key={i}
          className={`border-r border-b border-black bg-[#c3dcb2] align-middle leading-[37px] text-black ${
            value === '15-Apr' ? 'p-0 pl-1.5 text-left' : value.includes('Transport') ? 'px-4 text-center' : 'p-0 text-center whitespace-nowrap'
          }`}
        >
          {value}
        </td>
      ))}
    </>
  );
}

// Empty cell; the one above or left of the coloured block carries its black edge
function Cell({ row, col }: { row: number; col: number }) {
  const overBlock = row === 4 && col >= 1 && col <= 14;
  const besideBlock = col === 0 && row >= 5 && row <= 9;
  const selected = row === 14 && COLUMNS[col].id === 'I';
  return (
    <td className={`relative border-r border-b p-0 ${overBlock ? 'border-r-[#bebebe] border-b-black' : besideBlock ? 'border-r-black border-b-[#bebebe]' : 'border-[#bebebe]'}`}>
      {selected && (
        <div className="absolute -top-[3px] -right-[3px] -bottom-[3px] -left-[3px] z-10 border-[3px] border-[#1e7145]">
          <span className="absolute -right-1.5 -bottom-1.5 h-[11px] w-[11px] border-2 border-white bg-[#1e7145]" />
        </div>
      )}
    </td>
  );
}

function Sheet() {
  return (
    <main className="min-h-0 flex-1 overflow-hidden bg-white font-['Lato'] text-[25px]">
      <table className="w-[2305px] table-fixed border-separate border-spacing-0">
        <colgroup>
          <col className="w-[54px]" />
          {COLUMNS.map((c) => (
            <col key={c.id} style={{ width: c.width }} />
          ))}
        </colgroup>
        <thead>
          <tr className="text-[24px]">
            <th className="h-[53px] border-r border-b border-[#a6a6a6] bg-[#f5f5f5] p-0">
              <Svg w={44} h={44} className="ml-2">
                <path d="M0 42 42 0v42z" fill="#dadada" />
              </Svg>
            </th>
            {COLUMNS.map((c) => (
              <th
                key={c.id}
                scope="col"
                className={`border-r border-r-[#dadada] p-0 ${
                  c.id === 'I'
                    ? 'border-b-[3px] border-b-[#1e7145] bg-[#eeeeee] font-bold text-[#1e7145]'
                    : 'border-b border-b-[#a6a6a6] bg-linear-to-b from-[#fbfbfb] to-[#f3f3f3] font-normal text-[#555555]'
                }`}
              >
                {c.id}
              </th>
            ))}
          </tr>
        </thead>
        <tbody>
          {ROWS.map((height, i) => {
            const row = i + 1;
            const coloured = row >= 5 && row <= 9;
            return (
              <tr key={row}>
                <th
                  scope="row"
                  style={{ height }}
                  className={`border-b border-b-[#dedede] p-0 pb-1.5 align-bottom text-[24px] leading-6 ${
                    row === 14
                      ? 'border-r-[3px] border-r-[#1e7145] bg-[#eeeeee] font-bold text-[#1e7145]'
                      : 'border-r border-r-[#a6a6a6] bg-linear-to-r from-[#fafafa] to-[#f4f4f4] font-normal text-[#555555]'
                  }`}
                >
                  {row}
                </th>
                <Cell row={row} col={0} />
                {row === 5 && <TitleRowCells />}
                {row === 7 && <HeadingCells />}
                {row === 9 && <ValueCells />}
                {!coloured && COLUMNS.slice(1, 15).map((c, k) => <Cell key={c.id} row={row} col={k + 1} />)}
                <Cell row={row} col={15} />
              </tr>
            );
          })}
        </tbody>
      </table>
    </main>
  );
}

// ---------- Bottom bars ----------

function SheetTabs() {
  return (
    <div className="flex h-[42px] shrink-0 items-start border-t border-[#bdbdbd] bg-[#ececec]">
      <button type="button" aria-label="Previous sheet" className="mt-[11px] ml-6">
        <Svg w={11} h={17}>
          <path d="M11 0v17L0 8.5z" fill="#b3b3b3" />
        </Svg>
      </button>
      <button type="button" aria-label="Next sheet" className="mt-[11px] ml-[26px]">
        <Svg w={11} h={17}>
          <path d="M0 0v17l11-8.5z" fill="#b3b3b3" />
        </Svg>
      </button>
      <button type="button" className="-mt-px ml-6 h-[37px] w-[127px] rounded-b-md border border-t-0 border-[#bdbdbd] bg-white pt-0.5 text-[19px] font-bold text-[#1e7b45]">
        Sheet1
      </button>
      <button type="button" aria-label="Add sheet" className="mt-[11px] ml-[22px]">
        <Svg w={17} h={17}>
          <path d="M8.5 0v17M0 8.5h17" stroke="#444444" strokeWidth="2.6" />
        </Svg>
      </button>
      <span className="ml-[21px] h-[33px] w-px bg-[#c4c4c4]" />
    </div>
  );
}

function StatusBar() {
  const [zoom, setZoom] = useState(57);
  return (
    <footer className="flex h-11 shrink-0 items-center border-t-2 border-[#c6c6c6] bg-[#f4f4f4] pr-10 pb-0.5 pl-[39px] text-[19px] text-[#5f5f5f]">
      <span>Ready</span>
      <button type="button" className="ml-[34px] flex items-center gap-1.5">
        <Svg w={25} h={28}>
          <circle cx="11.5" cy="5" r="3.3" stroke="currentColor" strokeWidth="1.6" />
          <path d="M8 7 3 4.5C1 4 .5 6.5 2 7.5l5.500 3v6L4 24c-.5 2 2 3 3 1l3-6M15 7l5-2.500c2-.5 2.500 2 1 3L15.500 10.500v3" stroke="currentColor" strokeWidth="1.6" strokeLinecap="round" />
          <circle cx="17.5" cy="20" r="7" fill="currentColor" />
          <path d="m14 20 2.500 2.500 4.500-5" stroke="#ffffff" strokeWidth="1.7" />
        </Svg>
        Accessibility: Good to go
      </button>
      <div className="ml-auto flex items-center text-[#444444]">
        <button type="button" aria-label="Normal view" className="flex h-9 w-[50px] items-center justify-center rounded-md bg-[#b5b5b5]">
          <Svg w={24} h={24}>
            <rect width="24" height="24" rx="4" fill="#333333" />
            <path d="M8 0v24M16 0v24M0 8h24M0 16h24" stroke="#b5b5b5" strokeWidth="1.4" />
          </Svg>
        </button>
        <button type="button" aria-label="Page layout" className="ml-6">
          <Svg w={20} h={27}>
            <path d="M3.5 1H12l7 7.5v15a2.5 2.5 0 0 1-2.5 2.5h-13A2.5 2.5 0 0 1 1 23.5v-20A2.5 2.5 0 0 1 3.5 1z" stroke="currentColor" strokeWidth="1.7" />
            <path d="M11.5 1v7.5H19M4.5 12.5h11v9.5h-11zM4.5 17h11M8 12.5V22" stroke="currentColor" strokeWidth="1.5" />
          </Svg>
        </button>
        <button type="button" aria-label="Page break preview" className="ml-9">
          <Svg w={24} h={27}>
            <path d="M3 1v5.5A2 2 0 0 0 5 8.5h14a2 2 0 0 0 2-2V1M3 26v-5.5a2 2 0 0 1 2-2h14a2 2 0 0 1 2 2V26" stroke="currentColor" strokeWidth="1.7" />
            <path d="M0 13.5h24" stroke="currentColor" strokeWidth="1.6" strokeDasharray="3.5 1.6" />
          </Svg>
        </button>
        <button type="button" aria-label="Zoom out" className="ml-7">
          <Svg w={14} h={14}>
            <path d="M0 7h14" stroke="currentColor" strokeWidth="1.8" />
          </Svg>
        </button>
        <input
          type="range"
          aria-label="Zoom"
          min={0}
          max={100}
          value={zoom}
          onChange={(e) => setZoom(Number(e.target.value))}
          className="mx-2.5 h-1.5 w-[160px] appearance-none rounded-full bg-[#a3a3a3] [&::-webkit-slider-thumb]:h-[26px] [&::-webkit-slider-thumb]:w-[26px] [&::-webkit-slider-thumb]:appearance-none [&::-webkit-slider-thumb]:rounded-full [&::-webkit-slider-thumb]:bg-white [&::-webkit-slider-thumb]:shadow-md"
        />
        <button type="button" aria-label="Zoom in">
          <Svg w={15} h={15}>
            <path d="M7.5 0v15M0 7.5h15" stroke="currentColor" strokeWidth="1.8" />
          </Svg>
        </button>
        <span className="ml-[26px] text-[#5f5f5f]">150%</span>
      </div>
    </footer>
  );
}

export default function App() {
  return (
    <div className="flex h-screen flex-col overflow-hidden bg-[#f3f3f3] font-['Inter',sans-serif]">
      <TitleBar />
      <RibbonTabs />
      <Ribbon />
      <FormulaBar />
      <Sheet />
      <SheetTabs />
      <StatusBar />
    </div>
  );
}
